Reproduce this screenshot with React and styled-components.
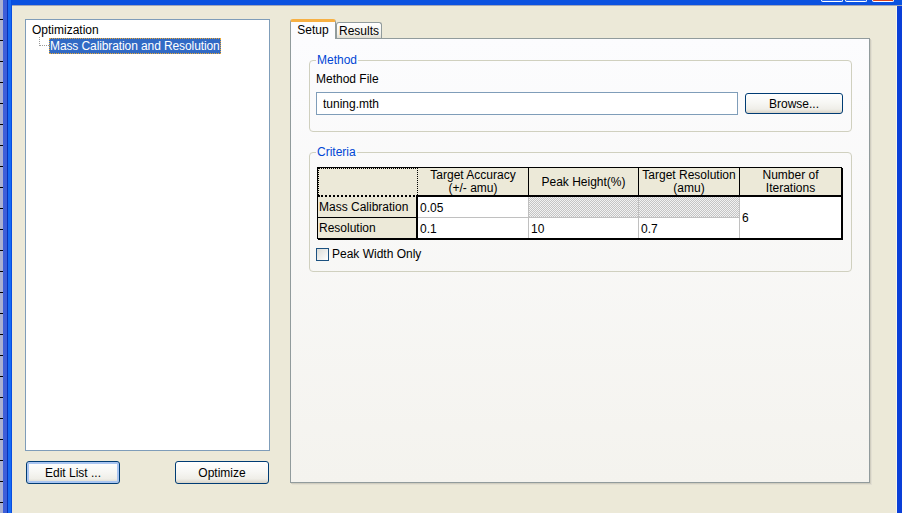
import styled, { createGlobalStyle } from "styled-components";

const GlobalStyle = createGlobalStyle`
  html, body {
    margin: 0;
    padding: 0;
  }
  body {
    font-family: "Liberation Sans", Arial, sans-serif;
    font-size: 12px;
    color: #000;
    background: #ece9d8;
  }
`;

const Screen = styled.div`
  display: flex;
  width: 902px;
  height: 513px;
  overflow: hidden;
  background: #ece9d8;
`;

// a sliver of whatever sits behind the window
const Desktop = styled.div`
  width: 3px;
  flex-shrink: 0;
  background:
    repeating-linear-gradient(to bottom, transparent 0 19px, #000 19px 20px, transparent 20px 21px),
    #aab0d0;
`;

const FrameLeft = styled.div`
  width: 9px;
  flex-shrink: 0;
  background: linear-gradient(to right, #3d5ed8 0 4px, #0831b8 4px 5px, #166af5 5px 8px, #0a4ee0 8px 9px);
`;

const Window = styled.div`
  flex: 1;
  display: flex;
  flex-direction: column;
  min-width: 0;
`;

const TitleStrip = styled.div`
  height: 5px;
  flex-shrink: 0;
  display: flex;
  justify-content: flex-end;
  align-items: flex-start;
  padding-right: 8px;
  background: #0b52e0;
  border-bottom: 1px solid #a0a6ba;
`;

const TitleButton = styled.div`
  width: 20px;
  height: 1px;
  margin-left: ${(p) => (p.$close ? "5px" : "2px")};
  border: 1px solid #fff;
  border-top: none;
  border-radius: 0 0 2px 2px;
  background: ${(p) => (p.$close ? "#d8431f" : "#2a68ee")};
`;

const Body = styled.div`
  flex: 1;
  display: flex;
`;

const Content = styled.div`
  flex: 1;
  display: flex;
  gap: 20px;
  padding: 13px 0 0 13px;
`;

const FrameRight = styled.div`
  width: 6px;
  flex-shrink: 0;
  background: linear-gradient(to right, #f6f5ef 0 1px, #0a3fd8 1px);
`;

const LeftPane = styled.div`
  width: 245px;
  display: flex;
  flex-direction: column;
`;

const Tree = styled.div`
  box-sizing: border-box;
  width: 245px;
  height: 432px;
  padding: 2px 0 0 6px;
  background: #fff;
  border: 1px solid #7f9db9;
`;

const TreeRow = styled.div`
  display: flex;
  align-items: flex-start;
  height: 16px;
  line-height: 16px;
  padding-left: ${(p) => (p.$child ? "7px" : "0")};
`;

const Connector = styled.span`
  box-sizing: border-box;
  width: 10px;
  height: 9px;
  margin-top: -1px;
  border-left: 1px dotted #9a9a9a;
  border-bottom: 1px dotted #9a9a9a;
`;

const Selected = styled.span`
  padding: 0 1px;
  height: 16px;
  letter-spacing: -0.1px;
  background: #316ac5;
  color: #fff;
  outline: 1px dotted #e8a838;
  outline-offset: -1px;
`;

const ButtonRow = styled.div`
  display: flex;
  justify-content: space-between;
  margin-top: 10px;
  padding: 0 1px;
`;

const XpButton = styled.button`
  box-sizing: border-box;
  width: ${(p) => p.$w || 94}px;
  height: ${(p) => p.$h || 23}px;
  padding: 0;
  font-family: "Liberation Sans", Arial, sans-serif;
  font-size: 12px;
  color: #000;
  border: 1px solid #003c74;
  border-radius: 3px;
  background: linear-gradient(to bottom, #ffffff 0%, #f7f7f4 45%, #efeee8 80%, #d8d3c8 100%);
  box-shadow: ${(p) => (p.$focused ? "inset 0 0 0 2px #a9c5f1" : "none")};
`;

const TabArea = styled.div`
  width: 582px;
  display: flex;
  flex-direction: column;
`;

const TabRow = styled.div`
  display: flex;
  align-items: flex-end;
  height: 19px;
`;

const Tab = styled.div`
  box-sizing: border-box;
  display: flex;
  align-items: center;
  justify-content: center;
  border: 1px solid #919b9c;
  border-bottom: none;
  border-radius: 3px 3px 0 0;
  ${(p) =>
    p.$active
      ? `
    width: 46px;
    height: 20px;
    margin-bottom: -1px;
    position: relative;
    z-index: 1;
    background: #fcfcfe;
    border-top: 3px solid #f7b043;
    padding-bottom: 2px;
  `
      : `
    width: 46px;
    height: 16px;
    background: linear-gradient(to bottom, #ffffff, #f3f2ec 70%, #e0ddd2);
  `}
`;

const Panel = styled.div`
  box-sizing: border-box;
  width: 580px;
  height: 445px;
  padding: 15px 17px 0 18px;
  border: 1px solid #919b9c;
  background: linear-gradient(to bottom, #fcfcfe, #f4f3ee);
  box-shadow: 1px 1px 0 #d0cdbf, 2px 2px 0 #e2dfd2;
`;

const Group = styled.fieldset`
  margin: ${(p) => (p.$gap ? "14px 0 0" : "0")};
  padding: ${(p) => p.$pad};
  border: 1px solid #d0d0bf;
  border-radius: 4px;
`;

const Legend = styled.legend`
  padding: 0 1px;
  font-size: 12px;
  line-height: 12px;
  color: #0046d5;
`;

const FieldLabel = styled.div`
  line-height: 14px;
  margin-bottom: 6px;
`;

const FileRow = styled.div`
  display: flex;
  align-items: center;
  gap: 7px;
`;

const TextInput = styled.input`
  box-sizing: border-box;
  width: 422px;
  height: 23px;
  padding: 0 6px;
  font-family: "Liberation Sans", Arial, sans-serif;
  font-size: 12px;
  color: #000;
  border: 1px solid #7f9db9;
  background: #fff;
  outline: none;
`;

const Grid = styled.div`
  display: grid;
  grid-template-columns: 100px 111px 110px 101px 101px;
  grid-template-rows: 29px 21px 20px;
  width: fit-content;
  margin-left: 1px;
  border: 1px solid #000;
  box-shadow: 1px 1px 0 #000;
`;

const Corner = styled.div`
  box-sizing: border-box;
  background: #ece9d8;
  border: 1px dotted #000;
  border-bottom: 2px dotted #000;
`;

const HeadCell = styled.div`
  box-sizing: border-box;
  display: flex;
  align-items: center;
  justify-content: center;
  text-align: center;
  line-height: 13px;
  padding-top: 1px;
  background: #ece9d8;
  border-right: ${(p) => (p.$last ? "none" : "1px solid #000")};
  border-bottom: 2px solid #000;
`;

const RowHead = styled.div`
  box-sizing: border-box;
  display: flex;
  align-items: center;
  padding-left: 1px;
  background: #ece9d8;
  border-right: 2px solid #000;
  border-bottom: ${(p) => (p.$last ? "none" : "1px solid #000")};
`;

const Cell = styled.div`
  box-sizing: border-box;
  padding: 4px 2px 0;
  line-height: 15px;
  background: ${(p) =>
    p.$hatched ? "repeating-conic-gradient(#c4c4c4 0 25%, #f2f2f2 0 50%) 0 0 / 2px 2px" : "#fff"};
  border-right: 1px solid #c0c0c0;
  border-bottom: ${(p) => (p.$last ? "none" : "1px solid #c0c0c0")};
`;

const SpanCell = styled.div`
  grid-row: span 2;
  display: flex;
  align-items: center;
  padding: 1px 2px 0;
  background: #fff;
`;

const CheckRow = styled.label`
  display: flex;
  align-items: center;
  gap: 3px;
  margin-top: 8px;
  line-height: 14px;
`;

const CheckBox = styled.span`
  box-sizing: border-box;
  width: 13px;
  height: 13px;
  border: 1px solid #1c5180;
  background: linear-gradient(135deg, #dcdcd7, #ffffff);
`;

export default function App() {
  return (
    <Screen>
      <GlobalStyle />
      <Desktop />
      <FrameLeft />
      <Window>
        <TitleStrip>
          <TitleButton />
          <TitleButton />
          <TitleButton $close />
        </TitleStrip>
        <Body>
          <Content>
            <LeftPane>
              <Tree>
                <TreeRow>Optimization</TreeRow>
                <TreeRow $child>
                  <Connector />
                  <Selected>Mass Calibration and Resolution</Selected>
                </TreeRow>
              </Tree>
              <ButtonRow>
                <XpButton $focused>Edit List ...</XpButton>
                <XpButton>Optimize</XpButton>
              </ButtonRow>
            </LeftPane>

            <TabArea>
              <TabRow>
                <Tab $active>Setup</Tab>
                <Tab>Results</Tab>
              </TabRow>
              <Panel>
                <Group $pad="6px 6px 16px 6px">
                  <Legend>Method</Legend>
                  <FieldLabel>Method File</FieldLabel>
                  <FileRow>
                    <TextInput defaultValue="tuning.mth" />
                    <XpButton $w={98} $h={21}>Browse...</XpButton>
                  </FileRow>
                </Group>

                <Group $gap $pad="9px 6px 10px 6px">
                  <Legend>Criteria</Legend>
                  <Grid>
                    <Corner />
                    <HeadCell>Target Accuracy<br />(+/- amu)</HeadCell>
                    <HeadCell>Peak Height(%)</HeadCell>
                    <HeadCell>Target Resolution<br />(amu)</HeadCell>
                    <HeadCell $last>Number of<br />Iterations</HeadCell>

                    <RowHead>Mass Calibration</RowHead>
                    <Cell>0.05</Cell>
                    <Cell $hatched />
                    <Cell $hatched />
                    <SpanCell>6</SpanCell>

                    <RowHead $last>Resolution</RowHead>
                    <Cell $last>0.1</Cell>
                    <Cell $last>10</Cell>
                    <Cell $last>0.7</Cell>
                  </Grid>
                  <CheckRow>
                    <CheckBox />
                    Peak Width Only
                  </CheckRow>
                </Group>
              </Panel>
            </TabArea>
          </Content>
          <FrameRight />
        </Body>
      </Window>
    </Screen>
  );
}
